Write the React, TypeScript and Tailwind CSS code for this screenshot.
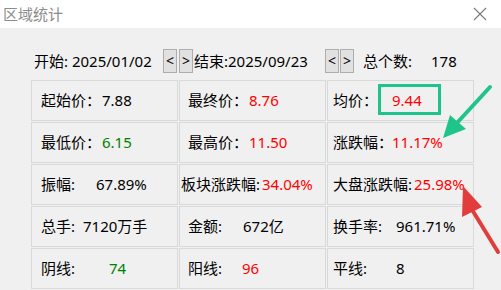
import React from 'react';

type Cell = {
  label: string;
  value: string;
  color: string;
  pad: string;
  lw: string;
  boxed?: boolean;
};

const FONT = '"Noto Sans", "Noto Sans CJK SC", sans-serif';

const cells: Cell[] = [
  { label: '起始价：', value: '7.88', color: 'text-black', pad: 'pl-[9px]', lw: 'w-[61px]' },
  { label: '最终价：', value: '8.76', color: 'text-[#ff0000]', pad: 'pl-[8px]', lw: 'w-[61px]' },
  { label: '均价：', value: '9.44', color: 'text-[#ff0000]', pad: 'pl-[5px]', lw: 'w-[59px]', boxed: true },

  { label: '最低价：', value: '6.15', color: 'text-[#008000]', pad: 'pl-[9px]', lw: 'w-[61px]' },
  { label: '最高价：', value: '11.50', color: 'text-[#ff0000]', pad: 'pl-[8px]', lw: 'w-[61px]' },
  { label: '涨跌幅：', value: '11.17%', color: 'text-[#ff0000]', pad: 'pl-[5px]', lw: 'w-[59px]' },

  { label: '振幅:', value: '67.89%', color: 'text-black', pad: 'pl-[9px]', lw: 'w-[55px]' },
  { label: '板块涨跌幅:', value: '34.04%', color: 'text-[#ff0000]', pad: 'pl-[1px]', lw: 'w-[81px]' },
  { label: '大盘涨跌幅:', value: '25.98%', color: 'text-[#ff0000]', pad: 'pl-[5px]', lw: 'w-[81px]' },

  { label: '总手:', value: '7120万手', color: 'text-black', pad: 'pl-[9px]', lw: 'w-[42px]' },
  { label: '金额:', value: '672亿', color: 'text-black', pad: 'pl-[8px]', lw: 'w-[55px]' },
  { label: '换手率:', value: '961.71%', color: 'text-black', pad: 'pl-[5px]', lw: 'w-[63px]' },

  { label: '阴线:', value: '74', color: 'text-[#008000]', pad: 'pl-[9px]', lw: 'w-[68px]' },
  { label: '阳线:', value: '96', color: 'text-[#ff0000]', pad: 'pl-[8px]', lw: 'w-[54px]' },
  { label: '平线:', value: '8', color: 'text-black', pad: 'pl-[5px]', lw: 'w-[63px]' },
];

const StepButton = ({ ch }: { ch: string }) => (
  <div className="flex h-[24px] w-[14px] items-center justify-center border border-[#adadad] bg-[#e1e1e1] text-[14px] leading-none text-black">
    {ch}
  </div>
);

export default function App() {
  return (
    <div className="relative h-[290px] w-[501px] overflow-hidden bg-[#f0f0f0] text-[15px] text-black" style={{ fontFamily: FONT }}>
      {/* title bar */}
      <div className="flex h-[28px] items-center justify-between bg-white pl-[3px] pr-[14px]">
        <span className="text-[15px] text-[#8c8c8c]">区域统计</span>
        <svg width="14" height="14" viewBox="0 0 14 14">
          <path d="M1 1 L13 13 M13 1 L1 13" stroke="#7a7a7a" strokeWidth="1.1" />
        </svg>
      </div>

      {/* date range row */}
      <div className="mt-[21px] flex h-[24px] items-center pl-[34px] leading-none">
        <span className="w-[129px] whitespace-nowrap">开始: 2025/01/02</span>
        <StepButton ch="<" />
        <div className="w-[2px]" />
        <StepButton ch=">" />
        <span className="w-[132px] whitespace-nowrap pl-[1px]">结束:2025/09/23</span>
        <StepButton ch="<" />
        <div className="w-[1px]" />
        <StepButton ch=">" />
        <span className="ml-[9px] w-[68px] whitespace-nowrap">总个数:</span>
        <span>178</span>
      </div>

      {/* stats grid */}
      <div className="ml-[31px] mt-[7px] grid grid-cols-[147px_147px_147px] gap-[1px]">
        {cells.map((c) => (
          <div
            key={c.label}
            className={`relative flex h-[41px] items-center whitespace-nowrap border border-[#d9d9d9] ${c.pad}`}
          >
            <span className={`inline-block ${c.lw}`}>{c.label}</span>
            <span className={c.color}>{c.value}</span>
            {c.boxed && (
              <div className="absolute left-[50px] top-[3px] h-[31px] w-[63px] border-[3px] border-[#1fc48a]" />
            )}
          </div>
        ))}
      </div>

      {/* annotation arrows */}
      <svg className="pointer-events-none absolute left-0 top-0" width="501" height="290" viewBox="0 0 501 290">
        <line x1="490" y1="87" x2="456" y2="124" stroke="#1fc48a" strokeWidth="4" strokeLinecap="round" />
        <polygon points="443,138 450,115 466,129" fill="#1fc48a" />
        <line x1="498" y1="252" x2="471" y2="208" stroke="#e23d3d" strokeWidth="4" strokeLinecap="round" />
        <polygon points="463,186 462,217 482,207" fill="#e23d3d" />
      </svg>
    </div>
  );
}
